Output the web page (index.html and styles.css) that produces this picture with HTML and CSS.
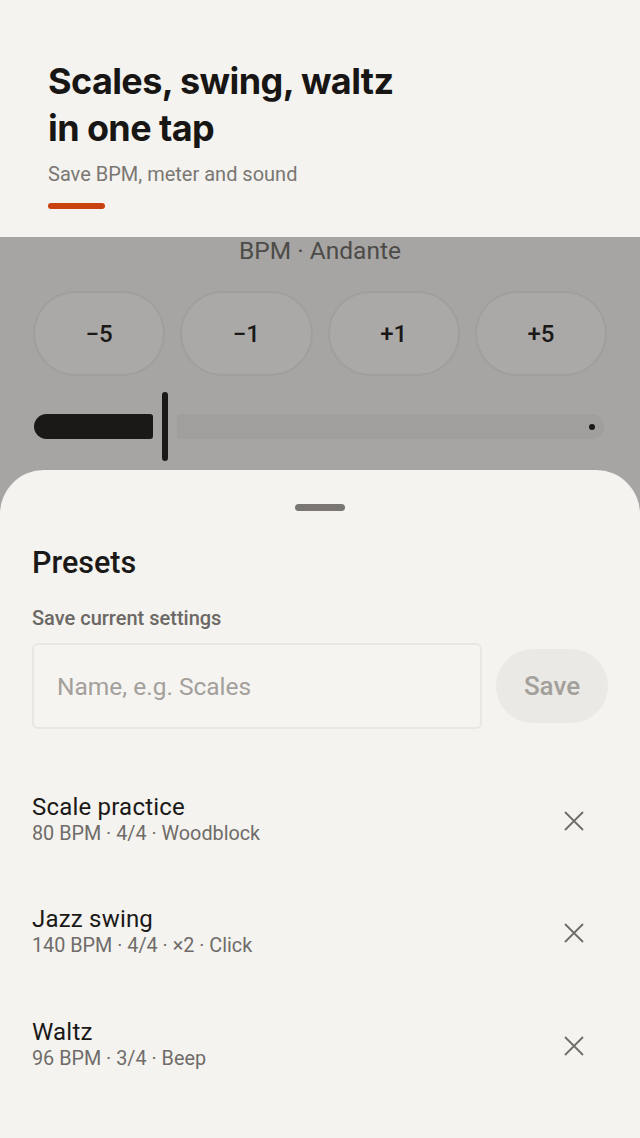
FILE: index.html
```html
<!DOCTYPE html>
<html lang="en">
<head>
<meta charset="utf-8">
<title>Presets</title>
<link rel="stylesheet" href="styles.css">
</head>
<body>
<div class="screen">
  <header class="caption">
    <h1 class="caption-title">Scales, swing, waltz<br>in one tap</h1>
    <p class="caption-sub">Save BPM, meter and sound</p>
    <div class="caption-bar"></div>
  </header>
  <div class="app">
    <section class="stage">
      <div class="tempo-label">BPM · Andante</div>
      <div class="steps">
        <button class="step">−5</button>
        <button class="step">−1</button>
        <button class="step">+1</button>
        <button class="step">+5</button>
      </div>
      <div class="slider">
        <div class="slider-fill"></div>
        <div class="slider-thumb"></div>
        <div class="slider-track"><span class="slider-dot"></span></div>
      </div>
    </section>
    <section class="sheet">
      <div class="handle"></div>
      <h2 class="sheet-title">Presets</h2>
      <div class="field-label">Save current settings</div>
      <div class="save-row">
        <div class="input">Name, e.g. Scales</div>
        <button class="save-btn">Save</button>
      </div>
      <ul class="presets">
        <li class="preset">
          <div class="preset-text">
            <div class="preset-name">Scale practice</div>
            <div class="preset-meta">80 BPM · 4/4 · Woodblock</div>
          </div>
          <svg class="close" viewBox="0 0 20 20" width="20" height="20"><path d="M1 1L19 19M19 1L1 19"/></svg>
        </li>
        <li class="preset">
          <div class="preset-text">
            <div class="preset-name">Jazz swing</div>
            <div class="preset-meta">140 BPM · 4/4 · ×2 · Click</div>
          </div>
          <svg class="close" viewBox="0 0 20 20" width="20" height="20"><path d="M1 1L19 19M19 1L1 19"/></svg>
        </li>
        <li class="preset">
          <div class="preset-text">
            <div class="preset-name">Waltz</div>
            <div class="preset-meta">96 BPM · 3/4 · Beep</div>
          </div>
          <svg class="close" viewBox="0 0 20 20" width="20" height="20"><path d="M1 1L19 19M19 1L1 19"/></svg>
        </li>
      </ul>
    </section>
  </div>
</div>
</body>
</html>
```

FILE: styles.css
```css
* { box-sizing: border-box; }
html, body { margin: 0; padding: 0; }
body {
  width: 640px;
  height: 1138px;
  overflow: hidden;
  background: #f4f3ef;
  font-family: Roboto, "Noto Sans", sans-serif;
  color: #1b1918;
}
.screen { display: flex; flex-direction: column; height: 1138px; }

.caption {
  height: 237px;
  padding: 58px 48px 0;
  background: #f4f3ef;
}
.caption-title {
  margin: 0;
  font-family: Inter, "Noto Sans", sans-serif;
  font-size: 36px;
  line-height: 47px;
  font-weight: 700;
  letter-spacing: -0.6px;
  color: #181615;
}
.caption-sub {
  margin: 9px 0 0;
  font-family: Roboto, sans-serif;
  font-size: 20px;
  line-height: 26px;
  color: #7a7773;
}
.caption-bar {
  margin-top: 16px;
  width: 57px;
  height: 6px;
  border-radius: 3px;
  background: #c9410f;
}

.app {
  flex: 1;
  display: flex;
  flex-direction: column;
  background: #a6a5a3;
}
.stage {
  height: 233px;
  display: flex;
  flex-direction: column;
}
.tempo-label {
  text-align: center;
  font-size: 24.5px;
  line-height: 26px;
  color: #4d4b48;
  margin-top: 1px;
}
.steps {
  display: flex;
  gap: 15px;
  padding: 0 33px;
  margin-top: 27px;
}
.step {
  flex: 1;
  height: 85px;
  border-radius: 43px;
  border: 2px solid #a09f9d;
  background: #aaa9a7;
  font-family: Roboto, sans-serif;
  font-size: 24px;
  font-weight: 500;
  color: #1b1918;
  padding: 0;
}
.slider {
  display: flex;
  align-items: center;
  margin-top: 16px;
  padding: 0 36px 0 34px;
  height: 69px;
}
.slider-fill {
  width: 119px;
  height: 25px;
  background: #1b1918;
  border-radius: 13px 3px 3px 13px;
}
.slider-thumb {
  width: 6px;
  height: 69px;
  margin: 0 9px;
  border-radius: 3px;
  background: #1b1918;
}
.slider-track {
  flex: 1;
  height: 25px;
  background: #a09f9d;
  border-radius: 3px 13px 13px 3px;
  display: flex;
  align-items: center;
  justify-content: flex-end;
  padding-right: 9px;
}
.slider-dot {
  width: 6px;
  height: 6px;
  border-radius: 50%;
  background: #1b1918;
}

.sheet {
  flex: 1;
  background: #f4f3ef;
  border-radius: 44px 44px 0 0;
  padding: 0 32px;
  display: flex;
  flex-direction: column;
}
.handle {
  align-self: center;
  width: 50px;
  height: 7px;
  border-radius: 4px;
  background: #7a7673;
  margin-top: 34px;
}
.sheet-title {
  margin: 34px 0 0;
  font-size: 30.5px;
  line-height: 36px;
  font-weight: 500;
  color: #1b1918;
}
.field-label {
  margin-top: 25px;
  font-size: 20px;
  line-height: 24px;
  font-weight: 500;
  color: #6b6865;
}
.save-row {
  display: flex;
  align-items: center;
  gap: 14px;
  margin-top: 13px;
}
.input {
  flex: 1;
  height: 86px;
  border: 2px solid #e9e7e3;
  border-radius: 6px;
  background: #f5f4f0;
  padding-left: 23px;
  display: flex;
  align-items: center;
  font-size: 24.5px;
  color: #a3a09c;
}
.save-btn {
  width: 112px;
  height: 74px;
  border-radius: 37px;
  border: none;
  background: #ebe9e5;
  font-family: Roboto, sans-serif;
  font-size: 26px;
  font-weight: 500;
  color: #a3a09c;
  padding: 0;
}
.presets {
  list-style: none;
  margin: 34px 0 0;
  padding: 0;
}
.preset {
  display: flex;
  align-items: center;
  justify-content: space-between;
  height: 112.5px;
  padding-right: 24px;
}
.preset-text { display: flex; flex-direction: column; }
.preset-name {
  font-size: 24px;
  line-height: 28px;
  letter-spacing: 0.2px;
  color: #1b1918;
}
.preset-meta {
  font-size: 19.8px;
  line-height: 25px;
  color: #6f6c69;
}
.close {
  width: 20px;
  height: 20px;
  margin-top: 3px;
  fill: none;
  stroke: #6f6c69;
  stroke-width: 1.8;
}
```
